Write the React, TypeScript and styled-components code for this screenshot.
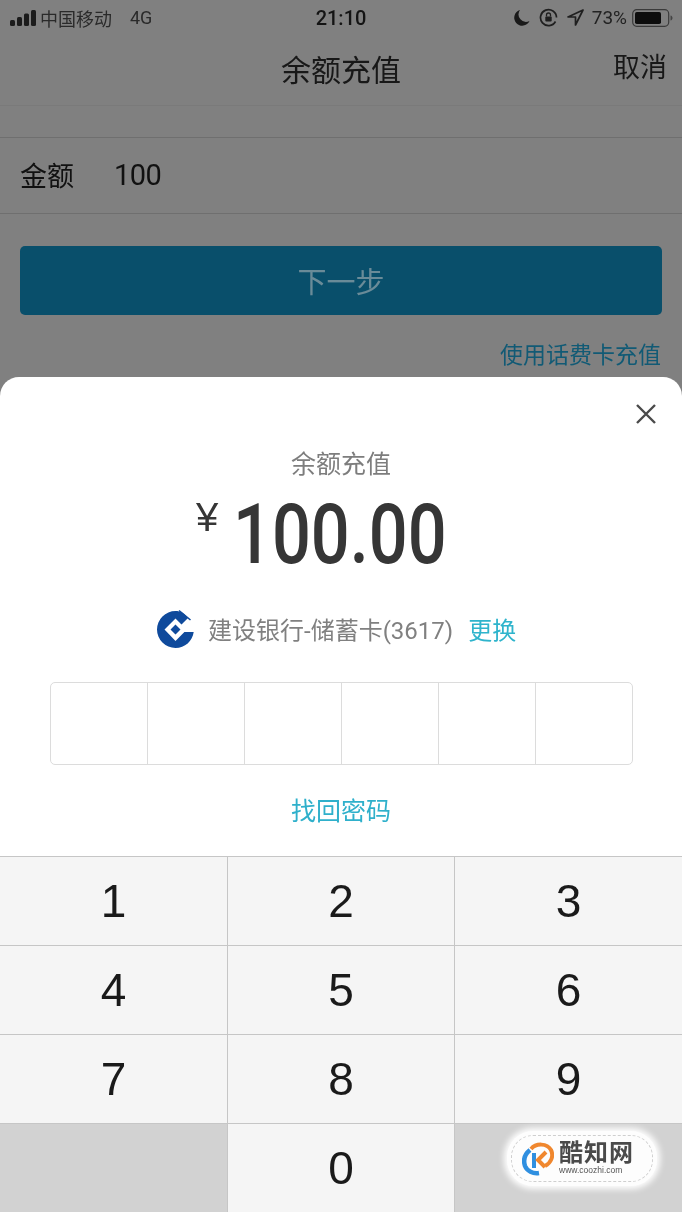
import React from "react";
import styled, { createGlobalStyle } from "styled-components";

const Global = createGlobalStyle`
  html, body { margin: 0; padding: 0; background: #808080; }
  body { font-family: Roboto, "Liberation Sans", "Noto Sans CJK SC", sans-serif; }
  * { box-sizing: border-box; }
`;
const CJK = `Roboto, "Noto Sans CJK SC", sans-serif`;

const Page = styled.div`
  width: 682px; height: 1212px; position: relative; overflow: hidden;
  display: flex; flex-direction: column; background: #808080;
  filter: blur(0.35px);
`;
const Backdrop = styled.div`
  height: 377px; flex: none; display: flex; flex-direction: column; background: #808080; font-family: ${CJK};
`;
const StatusBar = styled.div`
  height: 37px; flex: none; display: flex; align-items: center; padding: 0 9px 2px 10px; position: relative;
  color: #1c1c1c; font-size: 18px;
`;
const Carrier = styled.span`margin-left: 3px; color: #2a2a2a;`;
const Net = styled.span`margin-left: 18px; color: #2a2a2a;`;
const Clock = styled.span`
  position: absolute; left: 0; right: 0; top: 6px; text-align: center; font-weight: 500; font-size: 20px; line-height: 24px; color: #141414;
`;
const StatusRight = styled.div`
  margin-left: auto; display: flex; align-items: center; gap: 9px; color: #222;
`;
const Percent = styled.span`font-size: 19px; margin-left: -1px; margin-right: -4px;`;
const Nav = styled.div`
  height: 69px; flex: none; display: flex; align-items: center; justify-content: center; position: relative;
  padding-bottom: 6px; border-bottom: 1px solid #7a7a7a; font-size: 30px; color: #181818;
`;
const Cancel = styled.span`position: absolute; right: 15px; top: 12px; font-size: 27px; line-height: 38px; color: #181818;`;
const Gap = styled.div`height: 32px; flex: none; border-bottom: 1px solid #6f6f6f;`;
const AmountRow = styled.div`
  height: 76px; flex: none; display: flex; align-items: center; padding: 0 20px 2px; font-size: 27px; color: #111;
  border-bottom: 1px solid #6f6f6f;
`;
const AmountValue = styled.span`margin-left: 40px; font-size: 29px; letter-spacing: -0.5px;`;
const NextButton = styled.div`
  margin: 32px 20px 0; height: 69px; flex: none; border-radius: 5px; background: #094f6b;
  display: flex; align-items: center; justify-content: center; color: #6a8b98; font-size: 29px; padding-bottom: 2px;
`;
const CardLink = styled.div`
  margin-top: 24px; padding-right: 21px; text-align: right; font-size: 23px; line-height: 33px; color: #115a75;
`;
const Sheet = styled.div`
  height: 479px; flex: none; background: #fff; border-radius: 19px 19px 0 0; position: relative;
  display: flex; flex-direction: column; align-items: center; font-family: ${CJK};
`;
const Close = styled.svg`position: absolute; right: 25px; top: 26px;`;
const SheetTitle = styled.div`margin-top: 70px; font-size: 25px; line-height: 35px; color: #7d7d7d;`;
const Amount = styled.div`height: 84px; margin-top: 13px; display: flex; align-items: center; color: #363636; width: 682px; position: relative;`;
const Yen = styled.span`position: absolute; left: 196px; top: 0; font-size: 40px; line-height: 44px; font-family: "Liberation Sans", sans-serif;`;
const Big = styled.span`
  position: absolute; left: 233px; top: -10px; font-size: 83px; line-height: 100px; font-weight: 500;
  transform: scaleX(0.825); transform-origin: left center; font-family: Roboto, sans-serif;
`;
const BankRow = styled.div`
  margin-top: 29px; height: 40px; width: 682px; display: flex; align-items: center; padding-left: 157px; font-size: 24px; color: #808080;
`;
const BankName = styled.span`margin-left: 14px;`;
const Change = styled.span`margin-left: 15px; color: #2fb4cc;`;
const PinBox = styled.div`
  margin-top: 34px; width: 583px; height: 83px; flex: none; border: 1px solid #dcdcdc; border-radius: 5px; display: flex;
`;
const PinCell = styled.div`flex: 1; & + & { border-left: 1px solid #dcdcdc; }`;
const Forgot = styled.div`margin-top: 29px; font-size: 25px; line-height: 35px; color: #2fb0cb;`;
const Keypad = styled.div`
  height: 356px; flex: none; display: grid; grid-template-columns: 228px 227px 227px; grid-template-rows: repeat(4, 89px);
  background: #f5f5f5; font-family: "Liberation Sans", sans-serif;
`;
const Key = styled.div<{ $blank?: boolean; $edge?: boolean }>`
  display: flex; align-items: center; justify-content: center; font-size: 46px; color: #1a1a1a;
  background: ${p => (p.$blank ? "#d2d2d2" : "#f5f5f5")};
  border-top: 1px solid #c6c6c6;
  border-right: ${p => (p.$edge ? "none" : "1px solid #c6c6c6")};
`;
const Watermark = styled.div`
  position: absolute; left: 507px; top: 1131px; width: 150px; height: 55px; border-radius: 26px; background: #fdfdfd;
  box-shadow: 0 0 6px 3px #fff; display: flex; align-items: center; padding-left: 15px; font-family: ${CJK};
  &::after { content: ""; position: absolute; inset: 4px; border-radius: 22px; border: 1px dashed #cfcfcf; }
`;
const MarkText = styled.div`margin-left: 5px; display: flex; flex-direction: column;`;
const MarkName = styled.span`font-size: 24px; line-height: 24px; font-weight: 700; color: #4a4a4a; letter-spacing: 1px;`;
const MarkUrl = styled.span`font-size: 8.5px; line-height: 11px; color: #555; font-family: "Liberation Sans", sans-serif;`;

const Signal = () => (
  <svg width="27" height="16" viewBox="0 0 27 16" fill="#1c1c1c">
    <rect x="0" y="10" width="5" height="6" rx="1.5" />
    <rect x="7" y="7" width="5" height="9" rx="1.5" />
    <rect x="14" y="3.5" width="5" height="12.5" rx="1.5" />
    <rect x="21" y="0" width="5" height="16" rx="1.5" />
  </svg>
);
const Moon = () => (
  <svg width="16" height="17" viewBox="0 0 16 17"><path d="M6 1a8 8 0 1 0 9.5 11A7.5 7.5 0 0 1 6 1z" fill="#1a1a1a" /></svg>
);
const RotationLock = () => (
  <svg width="19" height="19" viewBox="0 0 19 19" fill="none" stroke="#1f1f1f" strokeWidth="1.7">
    <path d="M16.5 13.5A8 8 0 1 1 17.5 9.5" />
    <rect x="6.3" y="8.5" width="6.4" height="5" rx="1" fill="#1f1f1f" stroke="none" />
    <path d="M7.5 8.5V7a2 2 0 0 1 4 0v1.5" strokeWidth="1.3" />
  </svg>
);
const Location = () => (
  <svg width="17" height="17" viewBox="0 0 17 17" fill="none" stroke="#1f1f1f" strokeWidth="1.7" strokeLinejoin="round">
    <path d="M16 1 L1 8 H8.5 V16 Z" />
  </svg>
);
const Battery = () => (
  <svg width="41" height="18" viewBox="0 0 41 18">
    <rect x="0.7" y="0.7" width="36" height="16.6" rx="4" fill="none" stroke="#3a3a3a" strokeWidth="1.2" />
    <rect x="3" y="3" width="26" height="12" rx="1.8" fill="#0d0d0d" />
    <path d="M38.5 6.5c1.4.3 2 1.3 2 2.5s-.6 2.2-2 2.5z" fill="#444" />
  </svg>
);
const CcbLogo = () => (
  <svg width="37" height="39" viewBox="0 0 37 39">
    <path fill="#0f4a9c" fillRule="evenodd" d="M18.5 2A18.5 18.5 0 0 0 18.5 39C28 39 35.5 32 36.7 23H27.4L18.5 32 7.5 20.5 18.5 9.5 24.5 15.5 31 9C27.5 4.5 23.500 2 18.5 2ZM18.5 15.500L13.500 20.500 18.5 25.500 23.500 20.500Z" />
    <path fill="none" stroke="#0f4a9c" strokeWidth="1.6" d="M22 1.500 33.500 11" />
  </svg>
);
const MarkLogo = () => (
  <svg width="32" height="36" viewBox="0 0 32 36" fill="none">
    <path d="M8 9C3 13 1 19 3 25c2 5 8 8 14 7" stroke="#2f8fe0" strokeWidth="4.500" />
    <path d="M9 8C14 2 25 2 29 9c3 6 0 13-6 16" stroke="#f0872e" strokeWidth="4" />
    <path d="M12 12v15" stroke="#2f8fe0" strokeWidth="4" />
    <path d="M24 11 16 19l7 7" stroke="#f0872e" strokeWidth="4" />
  </svg>
);

const keys = ["1", "2", "3", "4", "5", "6", "7", "8", "9", "", "0", ""];

export default function App() {
  return (
    <Page>
      <Global />
      <Backdrop>
        <StatusBar>
          <Signal />
          <Carrier>中国移动</Carrier>
          <Net>4G</Net>
          <Clock>21:10</Clock>
          <StatusRight>
            <Moon />
            <RotationLock />
            <Location />
            <Percent>73%</Percent>
            <Battery />
          </StatusRight>
        </StatusBar>
        <Nav>
          余额充值
          <Cancel>取消</Cancel>
        </Nav>
        <Gap />
        <AmountRow>
          金额
          <AmountValue>100</AmountValue>
        </AmountRow>
        <NextButton>下一步</NextButton>
        <CardLink>使用话费卡充值</CardLink>
      </Backdrop>
      <Sheet>
        <Close width="22" height="22" viewBox="0 0 22 22" stroke="#4a4a4a" strokeWidth="2.400" fill="none">
          <path d="M2 2 20 20M20 2 2 20" />
        </Close>
        <SheetTitle>余额充值</SheetTitle>
        <Amount>
          <Yen>¥</Yen>
          <Big>100.00</Big>
        </Amount>
        <BankRow>
          <CcbLogo />
          <BankName>建设银行-储蓄卡(3617)</BankName>
          <Change>更换</Change>
        </BankRow>
        <PinBox>
          {[0, 1, 2, 3, 4, 5].map(i => <PinCell key={i} />)}
        </PinBox>
        <Forgot>找回密码</Forgot>
      </Sheet>
      <Keypad>
        {keys.map((k, i) => (
          <Key key={i} $blank={i === 9 || i === 11} $edge={i % 3 === 2}>{k}</Key>
        ))}
      </Keypad>
      <Watermark>
        <MarkLogo />
        <MarkText>
          <MarkName>酷知网</MarkName>
          <MarkUrl>www.coozhi.com</MarkUrl>
        </MarkText>
      </Watermark>
    </Page>
  );
}
